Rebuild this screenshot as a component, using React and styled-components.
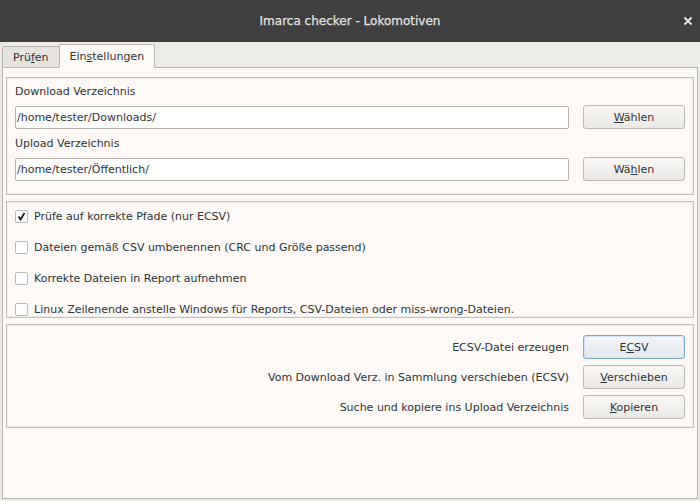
import styled, { createGlobalStyle } from 'styled-components';

const GlobalStyle = createGlobalStyle`
	html, body {
		margin: 0;
		padding: 0;
		background: #edebe7;
		font-family: 'DejaVu Sans', 'Liberation Sans', sans-serif;
		font-size: 11px;
		color: #2e3436;
	}
`;

const Window = styled.div`
	width: 700px;
	height: 501px;
	display: flex;
	flex-direction: column;
	background: #edebe7;
	overflow: hidden;
`;

const TitleBar = styled.div`
	height: 42px;
	flex: none;
	display: flex;
	align-items: center;
	justify-content: center;
	position: relative;
	background: #3f3f3f;
	color: #e2e2e2;
	font-size: 12px;
	font-weight: normal;
	-webkit-text-stroke: 0.25px #e2e2e2;
`;

const CloseButton = styled.span`
	position: absolute;
	right: 4px;
	top: 13px;
	width: 16px;
	height: 16px;
	display: flex;
	align-items: center;
	justify-content: center;
`;

const TabStrip = styled.div`
	display: flex;
	align-items: flex-end;
	height: 24px;
	padding: 0 2px;
	margin-top: 1px;
`;

const Tab = styled.div`
	height: ${(p) => (p.active ? '22px' : '20px')};
	padding: 0 10px;
	display: flex;
	align-items: center;
	background: ${(p) => (p.active ? '#fcfaf7' : '#e6e3df')};
	border: 1px solid #bab6b0;
	border-bottom: ${(p) => (p.active ? '1px solid #fcfaf7' : '1px solid #bab6b0')};
	border-radius: 2px 2px 0 0;
	margin-left: ${(p) => (p.active ? '-1px' : '0')};
	margin-bottom: -1px;
	position: relative;
	z-index: ${(p) => (p.active ? 1 : 0)};
	color: #2e3436;
`;

const Notebook = styled.div`
	margin: 0 2px 2px;
	flex: 1;
	background: #fcf9f6;
	border: 1px solid #b6b2ac;
	padding: 9px 3px;
	display: flex;
	flex-direction: column;
	gap: 6px;
`;

const Frame = styled.div`
	border: 1px solid #c4c0ba;
	box-shadow: inset 0 0 0 1px #f1eeea;
	padding: ${(p) => p.pad || '7px 8px'};
	display: flex;
	flex-direction: column;
	gap: ${(p) => p.gap || '0'};
`;

const FieldLabel = styled.div`
	height: 14px;
	line-height: 14px;
	margin-bottom: 6px;
	margin-top: ${(p) => (p.second ? '8px' : '0')};
`;

const Row = styled.div`
	display: flex;
	align-items: center;
	justify-content: ${(p) => (p.end ? 'flex-end' : 'flex-start')};
	gap: 14px;
`;

const Entry = styled.div`
	flex: 1;
	height: 23px;
	box-sizing: border-box;
	border: 1px solid #b7b3ad;
	border-radius: 2px;
	background: #ffffff;
	display: flex;
	align-items: center;
	padding-left: 1px;
	color: #2e3436;
`;

const Button = styled.button`
	width: 102px;
	height: 24px;
	flex: none;
	box-sizing: border-box;
	font: inherit;
	color: #2e3436;
	border: 1px solid ${(p) => (p.focused ? '#7ea7d0' : '#bdb9b3')};
	border-radius: 3px;
	background: ${(p) =>
		p.focused
			? 'linear-gradient(#f4f6f9, #e3e8ee)'
			: 'linear-gradient(#f8f7f5, #ebe9e6)'};
	box-shadow: ${(p) => (p.focused ? 'inset 0 0 0 1px #d5e2ef' : 'none')};
	padding: 0;
`;

const CheckRow = styled.label`
	display: flex;
	align-items: center;
	gap: 6px;
	height: 16px;
`;

const CheckBox = styled.span`
	width: 13px;
	height: 13px;
	box-sizing: border-box;
	border: 1px solid #bcb8b2;
	border-radius: 2px;
	background: #ffffff;
	display: flex;
	align-items: center;
	justify-content: center;
`;

const ActionLabel = styled.span`
	text-align: right;
`;

const checks = [
	{ text: 'Prüfe auf korrekte Pfade (nur ECSV)', checked: true },
	{ text: 'Dateien gemäß CSV umbenennen (CRC und Größe passend)' },
	{ text: 'Korrekte Dateien in Report aufnehmen' },
	{ text: 'Linux Zeilenende anstelle Windows für Reports, CSV-Dateien oder miss-wrong-Dateien.' },
];

export default function App() {
	return (
		<Window>
			<GlobalStyle />
			<TitleBar>
				Imarca checker - Lokomotiven
				<CloseButton>
					<svg width="10" height="10" viewBox="0 0 10 10">
						<path d="M1.5 1.5 L8.5 8.5 M8.5 1.5 L1.5 8.5" stroke="#e6e6e6" strokeWidth="2" />
					</svg>
				</CloseButton>
			</TitleBar>
			<TabStrip>
				<Tab>
					Prü<u>f</u>en
				</Tab>
				<Tab active>
					Ein<u>s</u>tellungen
				</Tab>
			</TabStrip>
			<Notebook>
				<Frame pad="7px 8px 13px">
					<FieldLabel>Download Verzeichnis</FieldLabel>
					<Row>
						<Entry>/home/tester/Downloads/</Entry>
						<Button>
							<u>W</u>ählen
						</Button>
					</Row>
					<FieldLabel second>Upload Verzeichnis</FieldLabel>
					<Row>
						<Entry>/home/tester/Öffentlich/</Entry>
						<Button>
							Wä<u>h</u>len
						</Button>
					</Row>
				</Frame>
				<Frame pad="6px 8px 0" gap="15px">
					{checks.map((c) => (
						<CheckRow key={c.text}>
							<CheckBox>
								{c.checked && (
									<svg width="9" height="9" viewBox="0 0 9 9">
										<path d="M1.5 4.5 L3.5 7.5 L7.5 1" fill="none" stroke="#1e1e1e" strokeWidth="1.8" />
									</svg>
								)}
							</CheckBox>
							{c.text}
						</CheckRow>
					))}
				</Frame>
				<Frame pad="10px 8px 8px" gap="6px">
					<Row end>
						<ActionLabel>ECSV-Datei erzeugen</ActionLabel>
						<Button focused>
							E<u>C</u>SV
						</Button>
					</Row>
					<Row end>
						<ActionLabel>Vom Download Verz. in Sammlung verschieben (ECSV)</ActionLabel>
						<Button>
							<u>V</u>erschieben
						</Button>
					</Row>
					<Row end>
						<ActionLabel>Suche und kopiere ins Upload Verzeichnis</ActionLabel>
						<Button>
							<u>K</u>opieren
						</Button>
					</Row>
				</Frame>
			</Notebook>
		</Window>
	);
}
